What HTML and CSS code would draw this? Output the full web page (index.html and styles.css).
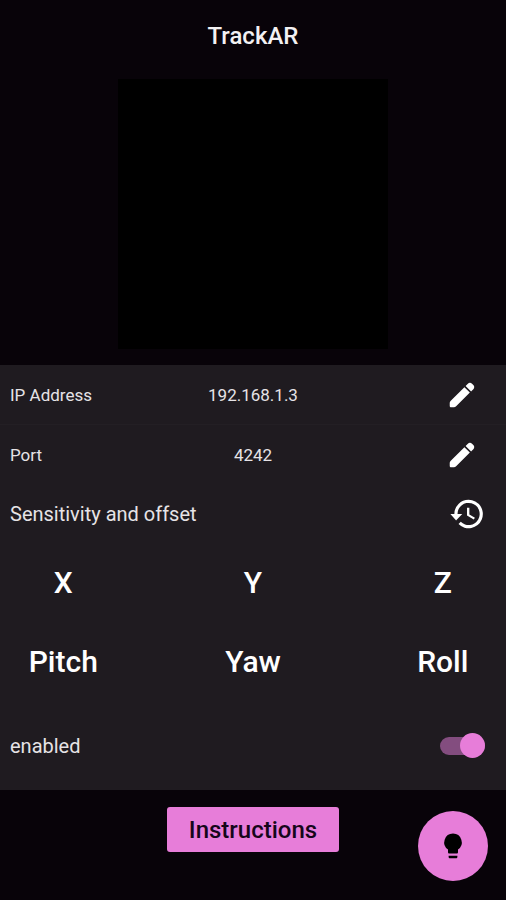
FILE: index.html
```html
<!DOCTYPE html>
<html lang="en">
<head>
<meta charset="utf-8">
<meta name="viewport" content="width=device-width, initial-scale=1">
<title>TrackAR</title>
<link rel="stylesheet" href="styles.css">
</head>
<body>
<div class="app">
  <header class="header"><h1 class="title">TrackAR</h1></header>
  <div class="preview"></div>
  <main class="panel">
    <div class="row divided">
      <span>IP Address</span>
      <span class="value">192.168.1.3</span>
      <button class="icon-button edit" type="button" aria-label="Edit IP address">
        <svg class="pencil" viewBox="0 0 24 24" aria-hidden="true"><path d="M2.800 18V20.200c0 .6.400 1 1 1h2.200c.5 0 1-.2 1.400-.6L17.900 10.200l-4.100-4.100L3.400 16.500c-.4.4-.6.900-.6 1.500zM20.500 7.600c.9-.9.9-2.200 0-3.100l-1-1c-.9-.9-2.200-.9-3.100 0l-1.700 1.700 4.100 4.100z"/></svg>
      </button>
    </div>
    <div class="row">
      <span>Port</span>
      <span class="value">4242</span>
      <button class="icon-button edit" type="button" aria-label="Edit port">
        <svg class="pencil" viewBox="0 0 24 24" aria-hidden="true"><path d="M2.800 18V20.200c0 .6.400 1 1 1h2.200c.5 0 1-.2 1.400-.6L17.900 10.200l-4.100-4.100L3.400 16.500c-.4.4-.6.900-.6 1.500zM20.500 7.600c.9-.9.9-2.200 0-3.100l-1-1c-.9-.9-2.200-.9-3.100 0l-1.700 1.700 4.100 4.100z"/></svg>
      </button>
    </div>
    <div class="section">
      <h2 class="section-title">Sensitivity and offset</h2>
      <button class="icon-button" type="button" aria-label="Reset sensitivity and offset">
        <svg class="history" viewBox="0 0 24 24" aria-hidden="true"><path d="M13 3a9 9 0 0 0-9 9H1.500l3.500 3.890.07.14L9 12H6a7 7 0 1 1 2.060 4.940l-1.420 1.420A9 9 0 1 0 13 3zm-1 5v5l4.280 2.540.72-1.210-3.500-2.080V8z"/></svg>
      </button>
    </div>
    <div class="axes">
      <button class="axis" type="button">X</button>
      <button class="axis" type="button">Y</button>
      <button class="axis" type="button">Z</button>
      <button class="axis" type="button">Pitch</button>
      <button class="axis" type="button">Yaw</button>
      <button class="axis" type="button">Roll</button>
    </div>
    <div class="enable">
      <label for="enabled">enabled</label>
      <input class="switch" id="enabled" type="checkbox" role="switch" checked>
    </div>
  </main>
  <footer class="footer">
    <button class="instructions" type="button">Instructions</button>
    <button class="fab" type="button" aria-label="Toggle light">
      <svg class="bulb" viewBox="0 0 24 24" aria-hidden="true"><path d="M12 2a7 7 0 0 0-4 12.740V17c0 .55.45 1 1 1h6c.55 0 1-.45 1-1v-2.260A7 7 0 0 0 12 2zM8.500 19.700h7v1c0 .55-.45 1-1 1h-5c-.55 0-1-.45-1-1z"/></svg>
    </button>
  </footer>
</div>
</body>
</html>
```
FILE: styles.css
```css
* { box-sizing: border-box; }

body {
  margin: 0;
  background: #080309;
  color: #e6e3e6;
  font: 17px/24px Roboto, sans-serif;
}

button {
  margin: 0;
  padding: 0;
  border: 0;
  background: none;
  color: #fff;
  font: inherit;
  cursor: pointer;
}

svg { display: block; fill: currentColor; }

.app {
  display: flex;
  flex-direction: column;
  min-height: 100vh;
}

.header { padding: 20px 10px; text-align: center; }

.title {
  margin: 0;
  color: #f3f1f3;
  font-size: 24px;
  font-weight: 500;
  line-height: 32px;
}

.preview {
  width: 270px;
  aspect-ratio: 1;
  margin: 7px auto 16px;
  background: #000;
}

.panel { background: #1f1b20; }

.row {
  display: grid;
  grid-template-columns: 1fr auto 1fr;
  align-items: center;
  height: 60px;
  padding: 0 10px;
}

.divided { border-bottom: 1px solid #231f24; }

.icon-button {
  display: grid;
  place-items: center;
  width: 40px;
  height: 40px;
}

.edit { justify-self: end; margin-right: 14px; }
.pencil { width: 32px; height: 32px; }
.history { width: 38px; height: 38px; }

.section,
.enable {
  display: flex;
  align-items: center;
  justify-content: space-between;
  height: 58px;
  padding: 0 10px;
  font-size: 20px;
}

.section { padding-right: 19px; }

.section-title {
  margin: 0;
  font-size: 20px;
  font-weight: 400;
}

.axes {
  display: grid;
  grid-template-columns: repeat(3, 25%);
  justify-content: space-between;
}

.axis {
  height: 79px;
  font-size: 30px;
  font-weight: 500;
}

.enable { height: 89px; padding-right: 21px; }

.switch {
  display: flex;
  align-items: center;
  justify-content: flex-end;
  appearance: none;
  width: 45px;
  height: 18px;
  margin: 0;
  border-radius: 9px;
  background: #834d7f;
  cursor: pointer;
}

.switch::before {
  content: "";
  flex: none;
  width: 25px;
  height: 25px;
  border-radius: 50%;
  background: #e77dd9;
}

.switch:not(:checked) { justify-content: flex-start; background: #555; }

.footer {
  position: relative;
  display: flex;
  flex: 1;
  align-items: flex-start;
  justify-content: center;
  min-height: 110px;
  padding-top: 17px;
}

.instructions {
  height: 45px;
  padding: 0 22px;
  border-radius: 3px;
  background: #e77dd9;
  color: #16061a;
  font-size: 24px;
  font-weight: 500;
}

.fab {
  position: absolute;
  right: 18px;
  bottom: 19px;
  display: grid;
  place-items: center;
  width: 70px;
  height: 70px;
  border-radius: 50%;
  background: #e77dd9;
  color: #000;
}

.bulb { width: 30px; height: 30px; }
```
